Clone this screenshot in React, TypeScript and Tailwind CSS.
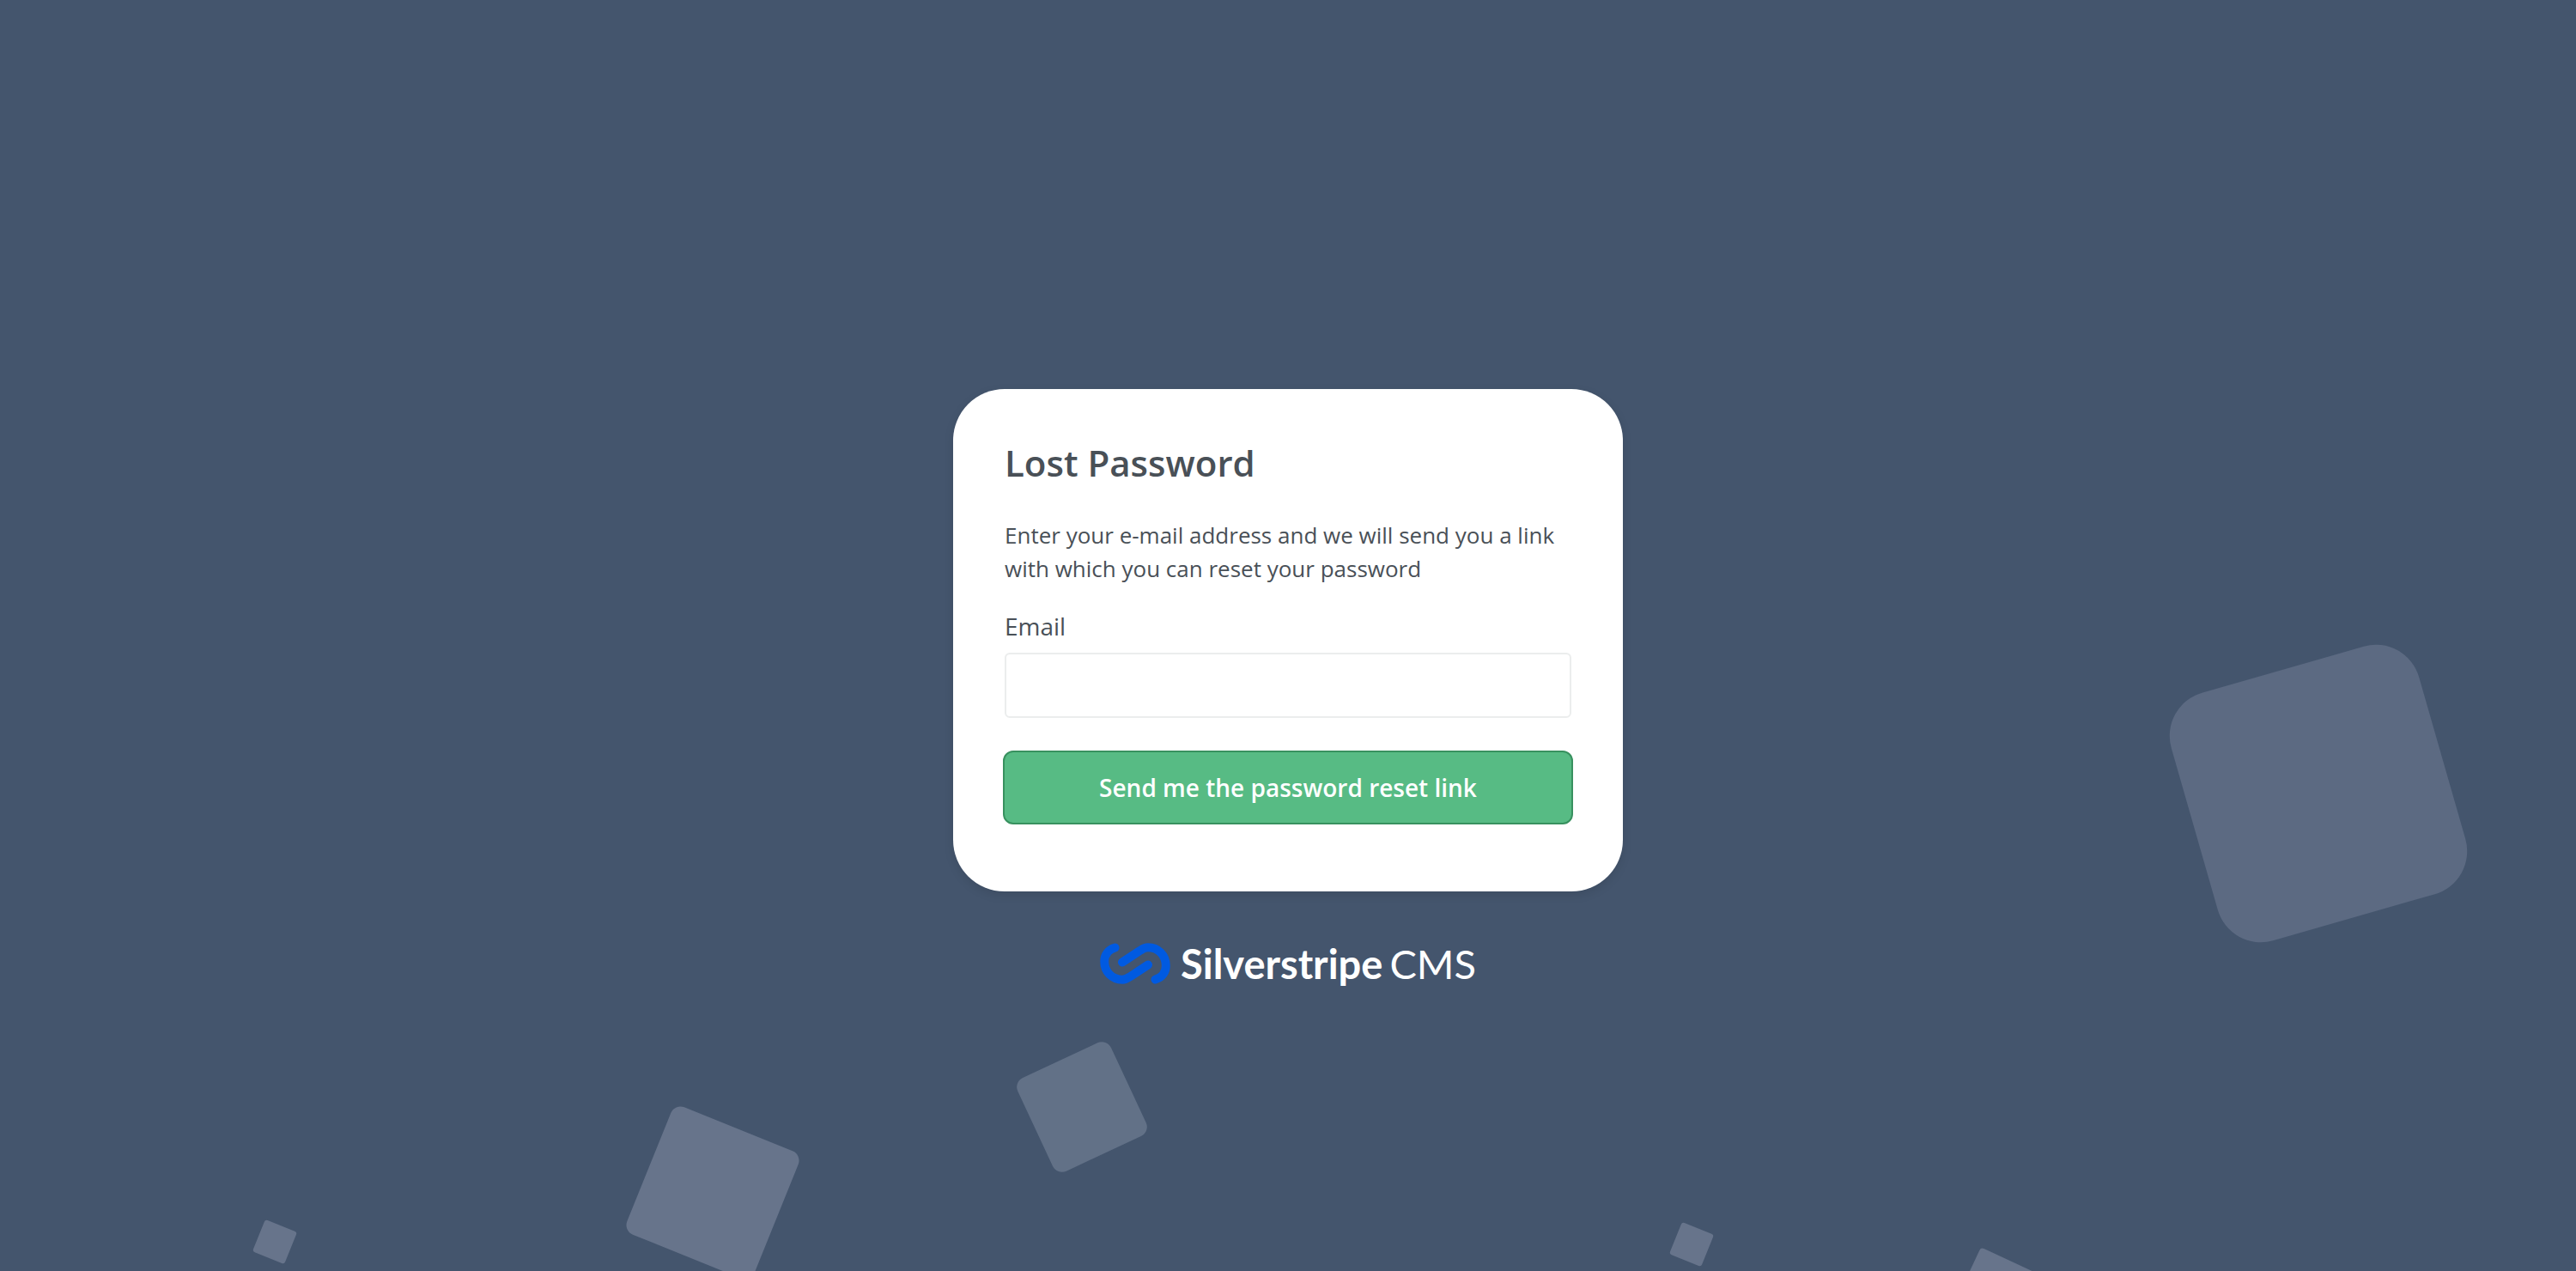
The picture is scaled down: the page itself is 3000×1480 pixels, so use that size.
const squares = [
  "right-[150px] bottom-[406px] size-[300px] -rotate-16 rounded-[52px] bg-[#5c6a82]",
  "left-[1200px] bottom-[131px] size-[120px] -rotate-25 rounded-xl bg-[#627187]",
  "left-[750px] bottom-[11px] size-[160px] rotate-22 rounded-xl bg-[#67748b]",
  "left-[300px] bottom-[14px] size-[40px] rotate-22 rounded-[3px] bg-[#67748b]",
  "right-[1010px] bottom-[11px] size-[40px] rotate-22 rounded-[3px] bg-[#67748b]",
  "right-[604px] -bottom-[112px] size-[120px] rotate-25 rounded-[4px] bg-[#67748b]",
];

function Logo() {
  return (
    <a
      href="#"
      aria-label="Silverstripe CMS"
      className="mt-[54px] flex items-center text-white"
    >
      <svg viewBox="0 0 82 48" className="h-[48px] w-[82px]" fill="none" aria-hidden="true">
        <g stroke="#005ae1" strokeWidth="10" strokeLinecap="round">
          <path d="M17.500 5.500 C9 8 5.200 14.500 5.200 21.500 C5.200 34 14.500 42.800 26 42.800 C30 42.800 32.500 41 35 39.300 L56 25.500" />
          <path d="M64.500 42.500 C73 40 76.800 33.500 76.800 26.500 C76.800 14 67.500 5.200 56 5.200 C52 5.200 49.500 7 47 8.700 L26 22.500" />
        </g>
      </svg>
      <span className="ml-3 text-[47px] leading-[60px] font-bold">Silverstripe</span>
      <span className="ml-2 text-[47px] leading-[60px] font-normal">CMS</span>
    </a>
  );
}

export default function App() {
  return (
    <div className="relative flex min-h-screen flex-col items-center overflow-hidden bg-[#44556d] pt-[453px] font-['Open_Sans',sans-serif] text-[#495057]">
      <div aria-hidden="true" className="absolute inset-0">
        {squares.map((classes) => (
          <div key={classes} className={`absolute ${classes}`} />
        ))}
      </div>
      <main className="relative w-full max-w-[780px] rounded-[60px] bg-white px-[60px] pt-[56px] pb-[78px] shadow-[0_4px_12px_rgba(0,0,0,0.1)]">
        <h1 className="text-[42px] leading-[60px] font-semibold">Lost Password</h1>
        <form onSubmit={(event) => event.preventDefault()}>
          <p className="mt-[35px] text-[26px] leading-[39px]">
            Enter your e-mail address and we will send you a link with which you can reset your
            password
          </p>
          <label htmlFor="email" className="mt-[26px] block text-[28px] leading-[42px] font-medium">
            Email
          </label>
          <input
            id="email"
            type="email"
            className="mt-[10px] block h-[76px] w-full rounded-md border-2 border-[#ebeded] bg-white px-5 text-[26px] outline-none"
          />
          <div className="-mx-[2px] mt-[38px]">
            <button
              type="submit"
              className="block h-[86px] w-full rounded-xl border-2 border-[#38915f] bg-[#57bb84] text-[28px] font-semibold text-white"
            >
              Send me the password reset link
            </button>
          </div>
        </form>
      </main>
      <div className="relative font-[Lato,sans-serif]">
        <Logo />
      </div>
    </div>
  );
}
